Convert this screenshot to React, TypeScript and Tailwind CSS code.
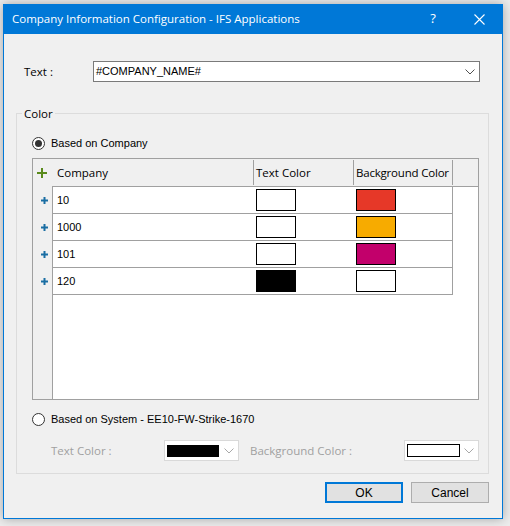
import React from "react";

const seg = { fontFamily: '"Open Sans", "Noto Sans", sans-serif' };
const ms = { fontFamily: '"Liberation Sans", Arial, sans-serif' };

function Chevron({ color }: { color: string }) {
  return (
    <svg width="10" height="6" viewBox="0 0 10 6">
      <path d="M0.5 0.5 L5 5 L9.5 0.5" fill="none" stroke={color} strokeWidth="1" />
    </svg>
  );
}

function BluePlus() {
  return (
    <svg width="7" height="7" viewBox="0 0 7 7">
      <rect x="2.5" y="0" width="2" height="7" fill="#1a6ea3" />
      <rect x="0" y="2.5" width="7" height="2" fill="#1a6ea3" />
    </svg>
  );
}

function GreenPlus() {
  return (
    <svg width="10" height="10" viewBox="0 0 10 10">
      <rect x="4" y="0" width="2" height="10" fill="#5a8a1c" />
      <rect x="0" y="4" width="10" height="2" fill="#5a8a1c" />
    </svg>
  );
}

function Radio({ checked }: { checked: boolean }) {
  return (
    <div className="w-[13px] h-[13px] rounded-full border border-[#333333] bg-white flex items-center justify-center">
      {checked && <div className="w-[7px] h-[7px] rounded-full bg-[#333333]" />}
    </div>
  );
}

const rows = [
  { c: "10", t: "#ffffff", b: "#e63828" },
  { c: "1000", t: "#ffffff", b: "#f7ab00" },
  { c: "101", t: "#ffffff", b: "#c2006b" },
  { c: "120", t: "#000000", b: "#ffffff" },
];

export default function App() {
  return (
    <div className="w-[510px] h-[526px] bg-[#ececec] pl-[3px] pt-[4px]">
      <div className="w-[500px] h-[515px] border border-[#0078d7] bg-[#f0f0f0] flex flex-col shadow-[0_0_10px_rgba(0,0,0,0.3)]">
        {/* Title bar */}
        <div className="h-[30px] bg-[#0078d7] flex items-center text-white -mt-px" style={seg}>
          <div className="pl-[8px] text-[11.5px] flex-1 pb-[1px]">Company Information Configuration - IFS Applications</div>
          <div className="w-[46px] text-center text-[13px]">?</div>
          <div className="w-[46px] flex justify-center">
            <svg width="11" height="11" viewBox="0 0 11 11">
              <path d="M0.5 0.5 L10.5 10.5 M10.5 0.5 L0.5 10.5" stroke="white" strokeWidth="1.1" />
            </svg>
          </div>
        </div>
        <div className="h-px bg-[#f0f0f0]" />

        {/* Text row */}
        <div className="flex items-center mt-[26px]">
          <div className="w-[89px] pl-[20px] text-[11.5px] text-black" style={seg}>Text :</div>
          <div className="w-[387px] h-[21px] border border-[#7a7a7a] bg-white flex items-center pl-[2px] pr-[4px]">
            <span className="flex-1 text-[11px] text-black" style={ms}>#COMPANY_NAME#</span>
            <Chevron color="#505050" />
          </div>
        </div>

        {/* Color group */}
        <fieldset className="ml-[12px] mt-[24px] w-[473px] border border-[#dcdcdc]">
          <legend className="ml-[5px] px-[2px] text-[11.5px] leading-[15px] text-black" style={seg}>Color</legend>

          <div className="pl-[15px] pr-[9px] pb-[12px]">
            <div className="flex items-center h-[16px] mt-[14px]">
              <Radio checked={true} />
              <span className="ml-[6px] text-[11px] text-black" style={ms}>Based on Company</span>
            </div>

            {/* Grid */}
            <div className="mt-[7px] flex w-[447px] h-[242px] border border-[#a0a0a0] bg-[#f0f0f0]">
              <div className="w-[19px] flex flex-col">
                <div className="h-[28px] flex items-center pl-[4px]">
                  <GreenPlus />
                </div>
                {rows.map((r) => (
                  <div key={r.c} className="h-[27px] flex items-center pl-[8px]">
                    <BluePlus />
                  </div>
                ))}
              </div>
              <div className="flex-1 flex flex-col">
                <div className="h-[28px] flex border-b border-[#a0a0a0] text-[11.5px] text-black" style={seg}>
                  <div className="w-[202px] border-r border-[#a0a0a0] pl-[5px] flex items-center my-px">Company</div>
                  <div className="w-[100px] border-r border-[#a0a0a0] pl-[2px] flex items-center my-px">Text Color</div>
                  <div className="w-[99px] border-r border-[#a0a0a0] pl-[2px] flex items-center my-px tracking-[-0.2px]">Background Color</div>
                  <div className="flex-1" />
                </div>
                <div className="flex-1 bg-white border-l border-[#a0a0a0] flex flex-col">
                  {rows.map((r) => (
                    <div key={r.c} className="w-[400px] h-[27px] flex border-b border-r border-[#a0a0a0]">
                      <div className="w-[200px] pl-[4px] flex items-center text-[11px] text-black" style={ms}>{r.c}</div>
                      <div className="w-[100px] pl-[3px] flex items-center">
                        <div className="w-[40px] h-[22px] border border-black" style={{ backgroundColor: r.t }} />
                      </div>
                      <div className="flex-1 pl-[3px] flex items-center">
                        <div className="w-[40px] h-[22px] border border-black" style={{ backgroundColor: r.b }} />
                      </div>
                    </div>
                  ))}
                </div>
              </div>
            </div>

            <div className="flex items-center h-[16px] mt-[11px]">
              <Radio checked={false} />
              <span className="ml-[6px] text-[11px] text-black" style={ms}>Based on System - EE10-FW-Strike-1670</span>
            </div>

            <div className="flex items-center mt-[13px] pl-[19px]">
              <div className="w-[113px] text-[11.5px] text-[#a0a0a0]" style={seg}>Text Color :</div>
              <div className="w-[75px] h-[21px] border border-[#d9d9d9] bg-white flex items-center pl-[2px] pr-[4px]">
                <div className="w-[52px] h-[12px] bg-black" />
                <div className="flex-1 flex justify-end"><Chevron color="#a8a8a8" /></div>
              </div>
              <div className="ml-[11px] flex-1 text-[11.5px] text-[#a0a0a0]" style={seg}>Background Color :</div>
              <div className="w-[75px] h-[21px] border border-[#d9d9d9] bg-white flex items-center pl-[2px] pr-[4px]">
                <div className="w-[53px] h-[13px] border border-black bg-white" />
                <div className="flex-1 flex justify-end"><Chevron color="#a8a8a8" /></div>
              </div>
            </div>
          </div>
        </fieldset>

        {/* Buttons */}
        <div className="flex justify-end gap-[8px] pr-[13px] mt-[8px]">
          <div className="w-[78px] h-[21px] border-2 border-[#0078d7] bg-[#e1e1e1] flex items-center justify-center text-[12px] text-black" style={ms}>OK</div>
          <div className="w-[78px] h-[21px] border border-[#adadad] bg-[#e1e1e1] flex items-center justify-center text-[12px] text-black" style={ms}>Cancel</div>
        </div>
      </div>
    </div>
  );
}
